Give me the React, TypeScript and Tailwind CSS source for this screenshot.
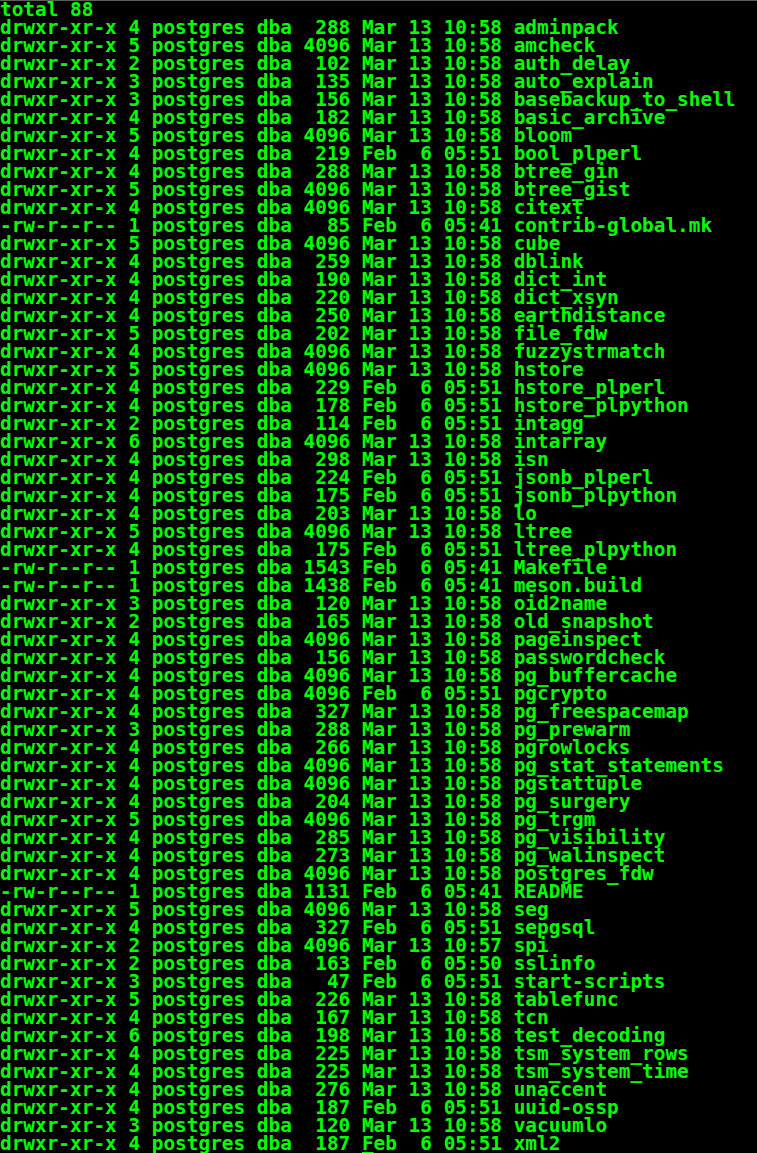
import React from 'react';

type Entry = [string, number, number, string, number, string, string];

const entries: Entry[] = [
  ['drwxr-xr-x', 4, 288, 'Mar', 13, '10:58', 'adminpack'],
  ['drwxr-xr-x', 5, 4096, 'Mar', 13, '10:58', 'amcheck'],
  ['drwxr-xr-x', 2, 102, 'Mar', 13, '10:58', 'auth_delay'],
  ['drwxr-xr-x', 3, 135, 'Mar', 13, '10:58', 'auto_explain'],
  ['drwxr-xr-x', 3, 156, 'Mar', 13, '10:58', 'basebackup_to_shell'],
  ['drwxr-xr-x', 4, 182, 'Mar', 13, '10:58', 'basic_archive'],
  ['drwxr-xr-x', 5, 4096, 'Mar', 13, '10:58', 'bloom'],
  ['drwxr-xr-x', 4, 219, 'Feb', 6, '05:51', 'bool_plperl'],
  ['drwxr-xr-x', 4, 288, 'Mar', 13, '10:58', 'btree_gin'],
  ['drwxr-xr-x', 5, 4096, 'Mar', 13, '10:58', 'btree_gist'],
  ['drwxr-xr-x', 4, 4096, 'Mar', 13, '10:58', 'citext'],
  ['-rw-r--r--', 1, 85, 'Feb', 6, '05:41', 'contrib-global.mk'],
  ['drwxr-xr-x', 5, 4096, 'Mar', 13, '10:58', 'cube'],
  ['drwxr-xr-x', 4, 259, 'Mar', 13, '10:58', 'dblink'],
  ['drwxr-xr-x', 4, 190, 'Mar', 13, '10:58', 'dict_int'],
  ['drwxr-xr-x', 4, 220, 'Mar', 13, '10:58', 'dict_xsyn'],
  ['drwxr-xr-x', 4, 250, 'Mar', 13, '10:58', 'earthdistance'],
  ['drwxr-xr-x', 5, 202, 'Mar', 13, '10:58', 'file_fdw'],
  ['drwxr-xr-x', 4, 4096, 'Mar', 13, '10:58', 'fuzzystrmatch'],
  ['drwxr-xr-x', 5, 4096, 'Mar', 13, '10:58', 'hstore'],
  ['drwxr-xr-x', 4, 229, 'Feb', 6, '05:51', 'hstore_plperl'],
  ['drwxr-xr-x', 4, 178, 'Feb', 6, '05:51', 'hstore_plpython'],
  ['drwxr-xr-x', 2, 114, 'Feb', 6, '05:51', 'intagg'],
  ['drwxr-xr-x', 6, 4096, 'Mar', 13, '10:58', 'intarray'],
  ['drwxr-xr-x', 4, 298, 'Mar', 13, '10:58', 'isn'],
  ['drwxr-xr-x', 4, 224, 'Feb', 6, '05:51', 'jsonb_plperl'],
  ['drwxr-xr-x', 4, 175, 'Feb', 6, '05:51', 'jsonb_plpython'],
  ['drwxr-xr-x', 4, 203, 'Mar', 13, '10:58', 'lo'],
  ['drwxr-xr-x', 5, 4096, 'Mar', 13, '10:58', 'ltree'],
  ['drwxr-xr-x', 4, 175, 'Feb', 6, '05:51', 'ltree_plpython'],
  ['-rw-r--r--', 1, 1543, 'Feb', 6, '05:41', 'Makefile'],
  ['-rw-r--r--', 1, 1438, 'Feb', 6, '05:41', 'meson.build'],
  ['drwxr-xr-x', 3, 120, 'Mar', 13, '10:58', 'oid2name'],
  ['drwxr-xr-x', 2, 165, 'Mar', 13, '10:58', 'old_snapshot'],
  ['drwxr-xr-x', 4, 4096, 'Mar', 13, '10:58', 'pageinspect'],
  ['drwxr-xr-x', 4, 156, 'Mar', 13, '10:58', 'passwordcheck'],
  ['drwxr-xr-x', 4, 4096, 'Mar', 13, '10:58', 'pg_buffercache'],
  ['drwxr-xr-x', 4, 4096, 'Feb', 6, '05:51', 'pgcrypto'],
  ['drwxr-xr-x', 4, 327, 'Mar', 13, '10:58', 'pg_freespacemap'],
  ['drwxr-xr-x', 3, 288, 'Mar', 13, '10:58', 'pg_prewarm'],
  ['drwxr-xr-x', 4, 266, 'Mar', 13, '10:58', 'pgrowlocks'],
  ['drwxr-xr-x', 4, 4096, 'Mar', 13, '10:58', 'pg_stat_statements'],
  ['drwxr-xr-x', 4, 4096, 'Mar', 13, '10:58', 'pgstattuple'],
  ['drwxr-xr-x', 4, 204, 'Mar', 13, '10:58', 'pg_surgery'],
  ['drwxr-xr-x', 5, 4096, 'Mar', 13, '10:58', 'pg_trgm'],
  ['drwxr-xr-x', 4, 285, 'Mar', 13, '10:58', 'pg_visibility'],
  ['drwxr-xr-x', 4, 273, 'Mar', 13, '10:58', 'pg_walinspect'],
  ['drwxr-xr-x', 4, 4096, 'Mar', 13, '10:58', 'postgres_fdw'],
  ['-rw-r--r--', 1, 1131, 'Feb', 6, '05:41', 'README'],
  ['drwxr-xr-x', 5, 4096, 'Mar', 13, '10:58', 'seg'],
  ['drwxr-xr-x', 4, 327, 'Feb', 6, '05:51', 'sepgsql'],
  ['drwxr-xr-x', 2, 4096, 'Mar', 13, '10:57', 'spi'],
  ['drwxr-xr-x', 2, 163, 'Feb', 6, '05:50', 'sslinfo'],
  ['drwxr-xr-x', 3, 47, 'Feb', 6, '05:51', 'start-scripts'],
  ['drwxr-xr-x', 5, 226, 'Mar', 13, '10:58', 'tablefunc'],
  ['drwxr-xr-x', 4, 167, 'Mar', 13, '10:58', 'tcn'],
  ['drwxr-xr-x', 6, 198, 'Mar', 13, '10:58', 'test_decoding'],
  ['drwxr-xr-x', 4, 225, 'Mar', 13, '10:58', 'tsm_system_rows'],
  ['drwxr-xr-x', 4, 225, 'Mar', 13, '10:58', 'tsm_system_time'],
  ['drwxr-xr-x', 4, 276, 'Mar', 13, '10:58', 'unaccent'],
  ['drwxr-xr-x', 4, 187, 'Feb', 6, '05:51', 'uuid-ossp'],
  ['drwxr-xr-x', 3, 120, 'Mar', 13, '10:58', 'vacuumlo'],
  ['drwxr-xr-x', 4, 187, 'Feb', 6, '05:51', 'xml2'],
];

const prefix = ([perm, links, size]: Entry) =>
  `${perm} ${links} postgres dba ${String(size).padStart(4)} `;

const suffix = ([, , , , day, time, name]: Entry) =>
  ` ${String(day).padStart(2)} ${time} ${name}`;

const App: React.FC = () => {
  const last = entries.length - 1;

  return (
    <div className="w-[757px] h-[1153px] bg-black border-t border-[#5c5c5c] overflow-hidden">
      <pre className="m-0 font-['DejaVu_Sans_Mono','Liberation_Mono',monospace] font-bold text-[19.4px] leading-[18px] text-[#00ff00] whitespace-pre">
        <div>total 88</div>
        {entries.map((e, i) => (
          <div key={e[6]}>
            {prefix(e)}
            {i === last ? (
              <>
                <span className="underline decoration-2 underline-offset-2">{e[3][0]}</span>
                {e[3].slice(1)}
              </>
            ) : (
              e[3]
            )}
            {suffix(e)}
          </div>
        ))}
      </pre>
    </div>
  );
};

export default App;
